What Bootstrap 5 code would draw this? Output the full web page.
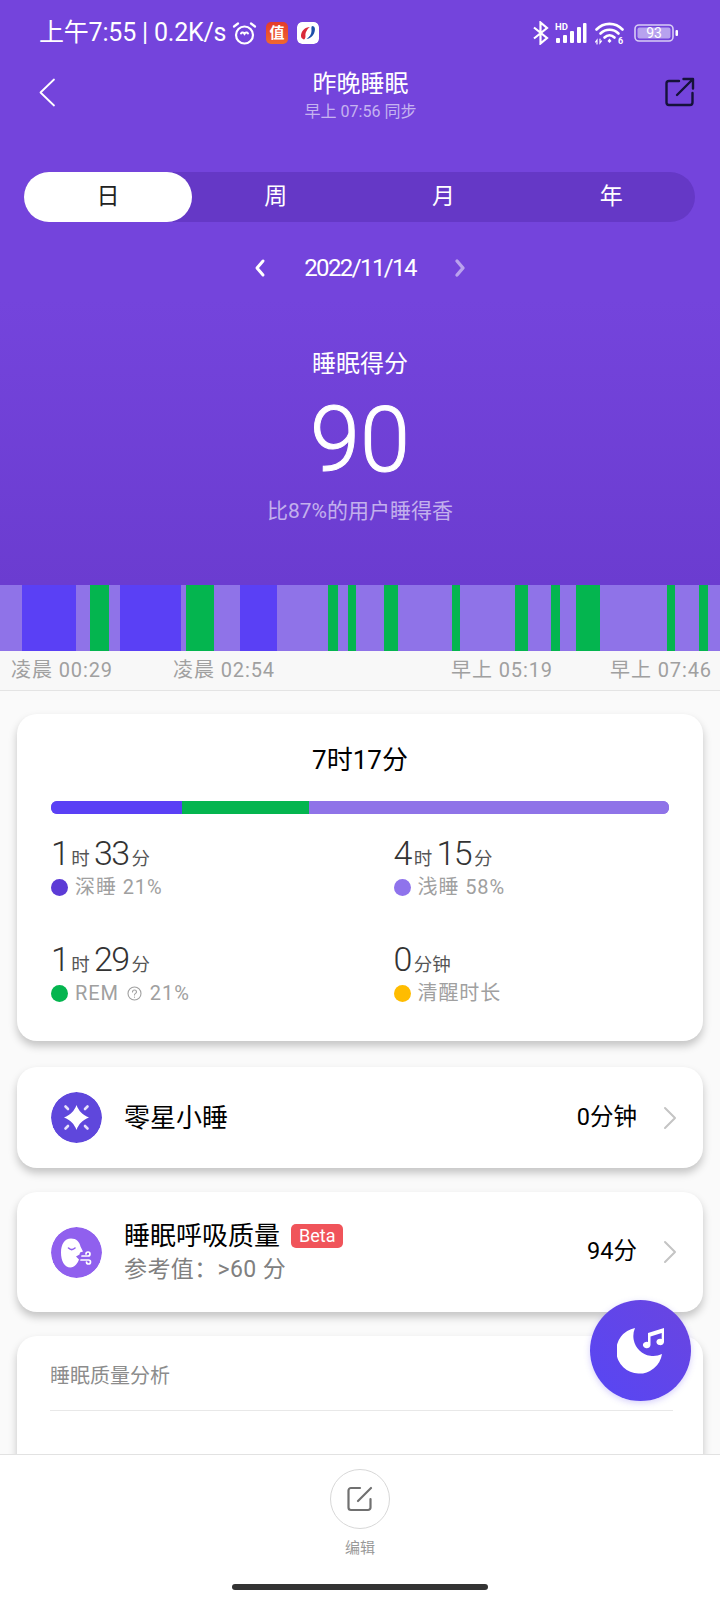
<!DOCTYPE html>
<html lang="zh-CN">

<head>
    <meta charset="UTF-8">
    <meta name="viewport" content="width=device-width, initial-scale=1.0">
    <title>昨晚睡眠</title>
    <link href="https://cdn.jsdelivr.net/npm/bootstrap@5.3.0/dist/css/bootstrap.min.css" rel="stylesheet">
    <script src="https://cdn.jsdelivr.net/npm/bootstrap@5.3.0/dist/js/bootstrap.bundle.min.js"></script>
    <style>
        html, body { width: 720px; height: 1600px; overflow: hidden; }
        body { font-family: Roboto, "Noto Sans CJK SC", sans-serif; background: #fafafa; color: #000; }
        .page { width: 720px; height: 1600px; position: relative; }
        .hero { height: 585px; background: linear-gradient(#7444dc 0, #7444dc 300px, #6b3cd0 585px); color: #fff; }
        .status-bar { height: 66px; padding: 0 41px 0 39px; font-size: 25px; line-height: 28px; }
        .status-text { width: 189px; white-space: nowrap; letter-spacing: -.2px; }
        .app-icon { width: 22px; height: 22px; border-radius: 5px; margin-left: 9px; }
        .sig-icon { margin-left: 6px; }
        .bat-icon { margin-left: 10px; }
        .nav-row { height: 60px; margin-top: -1px; padding: 0 25px 0 39px; }
        .nav-title { font-size: 24px; line-height: 32px; }
        .nav-sub { font-size: 16px; line-height: 20px; color: rgba(255, 255, 255, .6); margin-top: 2px; }
        .nav-back { margin-bottom: 5px; }
        .nav-share { margin-bottom: 6px; }
        .tab-track { margin: 47px 25px 0 24px; height: 50px; background: #6538c6; border-radius: 25px; }
        .tab-item { width: 168px; height: 50px; line-height: 50px; text-align: center; font-size: 23px; border-radius: 25px; }
        .tab-on { background: #fff; color: #222; }
        .date-row { height: 32px; margin-top: 30px; font-size: 24px; line-height: 32px; }
        .date-text { width: 112px; margin: 0 38px; text-align: center; white-space: nowrap; letter-spacing: -1.6px; }
        .score-label { margin-top: 64px; font-size: 24px; line-height: 32px; }
        .score-num { font-size: 90px; line-height: 92px; font-weight: 300; -webkit-text-stroke: 1px #fff; margin-top: 15px; }
        .score-sub { font-size: 21px; line-height: 28px; margin-top: 10px; color: rgba(255, 255, 255, .6); }
        .sleep-chart { height: 66px; background: #8f73e8; }
        .sleep-chart span { display: block; height: 66px; }
        .seg-l { background: #8f73e8; }
        .seg-d { background: #5a40f5; }
        .seg-g { background: #04b54f; }
        .time-band { height: 40px; padding: 0 0 0 11px; background: #f8f8f8; border-bottom: 1px solid #e4e4e4; font-size: 20px; line-height: 39px; color: #a0a0a0; letter-spacing: .9px; }
        .time-band span { white-space: nowrap; flex-shrink: 0; }
        .info-card { margin: 0 17px; border: 0; border-radius: 20px; background: #fff; box-shadow: 0 5px 9px rgba(0, 0, 0, .22); }
        .total-card { height: 327px; margin-top: 23px; padding: 28px 34px 0; }
        .total-time { font-size: 26px; line-height: 36px; text-align: center; }
        .total-bar { height: 13px; margin-top: 23px; border-radius: 6px; background: #8f73e8; }
        .stat-grid { display: grid; grid-template-columns: 342.5px 1fr; row-gap: 40px; margin-top: 21px; }
        .stat-val { height: 36px; font-size: 34px; line-height: 36px; font-weight: 300; color: #333; white-space: nowrap; letter-spacing: -1.5px; }
        .stat-val small { font-size: 18.5px; font-weight: 400; color: #555; letter-spacing: 0; margin: 0 4px 0 3px; }
        .stat-label { font-size: 20px; line-height: 28px; color: #a0a0a0; margin-top: 2px; white-space: nowrap; letter-spacing: .9px; }
        .stat-dot { width: 17px; height: 17px; border-radius: 50%; margin-right: 7px; }
        .row-card { padding: 0 26px 0 34px; }
        .nap-card { height: 101px; margin-top: 26px; }
        .breath-card { height: 120px; margin-top: 24px; }
        .row-icon { width: 51px; height: 51px; border-radius: 50%; margin-right: 22px; }
        .row-title { font-size: 26px; line-height: 36px; white-space: nowrap; }
        .row-sub { font-size: 23px; line-height: 32px; color: #808080; white-space: nowrap; letter-spacing: .4px; }
        .beta-tag { background: #f0545a; color: #fff; font-size: 18px; line-height: 24px; padding: 0 8px; border-radius: 5px; margin-left: 11px; }
        .row-value { font-size: 23.5px; margin-right: 26px; white-space: nowrap; }
        .analysis-card { height: 200px; margin-top: 24px; padding: 22px 30px 0 33px; border-radius: 20px 20px 0 0; }
        .analysis-title { font-size: 20px; line-height: 36px; color: #8c8c8c; padding-bottom: 16px; border-bottom: 1px solid #e8e8e8; }
        .fab { position: absolute; left: 590px; top: 1300px; width: 101px; height: 101px; border-radius: 50%; background: linear-gradient(45deg, #5746f4, #6a45e0); box-shadow: 0 2px 6px rgba(91, 69, 238, .25); }
        .bottom-bar { position: absolute; left: 0; top: 1454px; width: 720px; height: 146px; background: #fff; border-top: 1px solid #e2e2e2; }
        .edit-btn { width: 60px; height: 60px; margin-top: 14px; border: 1px solid #d8d8d8; border-radius: 50%; }
        .edit-label { font-size: 15px; line-height: 20px; color: #999; margin-top: 9px; }
        .home-bar { position: absolute; left: 232px; top: 129px; width: 256px; height: 6px; border-radius: 3px; background: #333; }
    </style>
</head>

<body>
    <div class="page overflow-hidden">
        <div class="hero">
            <!-- status bar -->
            <div class="status-bar d-flex align-items-center">
                <span class="status-text">上午7:55 | 0.2K/s</span>
                <svg class="ms-1" width="25" height="25" viewBox="0 0 25 25" fill="none" stroke="#fff" stroke-width="2.200" stroke-linecap="round">
                    <circle cx="12.500" cy="14" r="8.500" />
                    <path d="M2 5.500 6 2.500M23 5.500 19 2.500" />
                    <path d="M9 12.500c1-1.600 2.600-1 3.500.4.9-1.400 2.500-2 3.500-.4" stroke-width="2" />
                </svg>
                <span class="app-icon d-flex align-items-center justify-content-center text-white fw-bold" style="background:linear-gradient(#e33a2c,#f0682f);font-size:15px;line-height:1">值</span>
                <svg class="app-icon" viewBox="0 0 22 22">
                    <rect width="22" height="22" rx="5" fill="#fff" />
                    <path d="M4 14c0-5 4-9 9-9-3 2-5 6-4.500 9 0 3-1.500 4-2.500 3-1-.5-2-1.500-2-3z" fill="#d92b3a" />
                    <path d="M15 4c3 0 3.500 3 2.500 6-1 4-5 7-8 7 3-2 5-5 5-8 0-2-.5-4 .5-5z" fill="#1d4fa8" />
                </svg>
                <svg class="ms-auto" width="17" height="24" viewBox="0 0 17 24" fill="none" stroke="#fff" stroke-width="2.200">
                    <path d="M2 6.500 15 17 8.500 22.500V1.500L15 7 2 17.500" />
                </svg>
                <svg class="sig-icon" width="32" height="22" viewBox="0 0 32 22" fill="#fff">
                    <text x="0" y="8" font-family="Roboto" font-size="9.500" font-weight="700">HD</text>
                    <rect x="1" y="16" width="4" height="5" rx="1" />
                    <rect x="8" y="13" width="4" height="8" rx="1" />
                    <rect x="15" y="9" width="4" height="12" rx="1" />
                    <rect x="22" y="5" width="4" height="16" rx="1" />
                    <rect x="28" y="1" width="3.500" height="20" rx="1" />
                </svg>
                <svg class="ms-2" width="29" height="24" viewBox="0 0 29 24" fill="none" stroke="#fff" stroke-width="2.600" stroke-linecap="round">
                    <path d="M1.500 8.500C8.500 1 20.500 1 27.500 8.500" />
                    <path d="M5.500 12.500C10.500 7.500 18.500 7.500 23.500 12.500" />
                    <path d="M9.500 16.500C12.500 13.500 16.500 13.500 19.500 16.500" />
                    <path d="M14.500 17.500 12.500 20 14.500 22 16.500 20z" fill="#fff" stroke="none" />
                    <path d="M2 23v-4l-1.500 2M5 18v4l1.500-2" stroke-width="1.200" />
                    <text x="23" y="23" font-family="Roboto" font-size="9" font-weight="700" fill="#fff" stroke="none">6</text>
                </svg>
                <svg class="bat-icon" width="45" height="22" viewBox="0 0 45 22">
                    <rect x="1" y="3" width="38" height="16" rx="4" fill="none" stroke="#d8cdf5" stroke-width="1.600" />
                    <rect x="3.500" y="5.500" width="33" height="11" rx="2" fill="#b7a2ee" />
                    <rect x="41.500" y="8" width="2.500" height="6" rx="1" fill="#fff" />
                    <text x="20" y="16" text-anchor="middle" font-family="Roboto" font-size="14" fill="#fff">93</text>
                </svg>
            </div>

            <!-- nav -->
            <div class="nav-row d-flex align-items-center justify-content-between">
                <svg class="nav-back" width="17" height="29" viewBox="0 0 17 29" fill="none" stroke="#fff" stroke-width="1.800" stroke-linecap="round" stroke-linejoin="round">
                    <path d="M15 1.500 1.500 14.500 15 27.500" />
                </svg>
                <div class="text-center">
                    <div class="nav-title">昨晚睡眠</div>
                    <div class="nav-sub">早上 07:56 同步</div>
                </div>
                <svg class="nav-share" width="30" height="30" viewBox="0 0 30 30" fill="none" stroke="#15123a" stroke-width="2.400" stroke-linecap="round" stroke-linejoin="round">
                    <path d="M14 4H4a2.500 2.500 0 0 0-2.500 2.500v19A2.500 2.500 0 0 0 4 28h21a2.500 2.500 0 0 0 2.500-2.500V16" />
                    <path d="M12 18 27.500 2.500M18.500 2H28v9.500" />
                </svg>
            </div>

            <!-- day / week / month / year -->
            <div class="tab-track d-flex">
                <div class="tab-item tab-on">日</div>
                <div class="tab-item">周</div>
                <div class="tab-item">月</div>
                <div class="tab-item">年</div>
            </div>

            <div class="date-row d-flex align-items-center justify-content-center">
                <svg width="12" height="20" viewBox="0 0 12 20" fill="none" stroke="#fff" stroke-width="3" stroke-linecap="round" stroke-linejoin="round">
                    <path d="M9 3 3 10l6 7" />
                </svg>
                <span class="date-text">2022/11/14</span>
                <svg width="12" height="20" viewBox="0 0 12 20" fill="none" stroke="#fff" stroke-opacity=".5" stroke-width="3.400" stroke-linecap="round" stroke-linejoin="round">
                    <path d="M3 3l6 7-6 7" />
                </svg>
            </div>

            <div class="text-center">
                <div class="score-label">睡眠得分</div>
                <div class="score-num">90</div>
                <div class="score-sub">比87%的用户睡得香</div>
            </div>
        </div>

        <!-- sleep stages -->
        <div class="sleep-chart d-flex">
            <span class="seg-l" style="width:22px"></span>
            <span class="seg-d" style="width:54px"></span>
            <span class="seg-l" style="width:14px"></span>
            <span class="seg-g" style="width:19px"></span>
            <span class="seg-l" style="width:11px"></span>
            <span class="seg-d" style="width:61px"></span>
            <span class="seg-l" style="width:5px"></span>
            <span class="seg-g" style="width:28px"></span>
            <span class="seg-l" style="width:26px"></span>
            <span class="seg-d" style="width:37px"></span>
            <span class="seg-l" style="width:51px"></span>
            <span class="seg-g" style="width:10px"></span>
            <span class="seg-l" style="width:10px"></span>
            <span class="seg-g" style="width:8px"></span>
            <span class="seg-l" style="width:28px"></span>
            <span class="seg-g" style="width:14px"></span>
            <span class="seg-l" style="width:54px"></span>
            <span class="seg-g" style="width:8px"></span>
            <span class="seg-l" style="width:55px"></span>
            <span class="seg-g" style="width:13px"></span>
            <span class="seg-l" style="width:23px"></span>
            <span class="seg-g" style="width:9px"></span>
            <span class="seg-l" style="width:16px"></span>
            <span class="seg-g" style="width:24px"></span>
            <span class="seg-l" style="width:67px"></span>
            <span class="seg-g" style="width:8px"></span>
            <span class="seg-l" style="width:24px"></span>
            <span class="seg-g" style="width:9px"></span>
        </div>
        <div class="time-band d-flex">
            <span style="width:162px">凌晨 00:29</span>
            <span style="width:278px">凌晨 02:54</span>
            <span style="width:159px">早上 05:19</span>
            <span>早上 07:46</span>
        </div>

        <!-- total -->
        <div class="card info-card total-card">
            <div class="total-time">7时17分</div>
            <div class="progress total-bar">
                <div class="progress-bar seg-d" style="width:21.2%"></div>
                <div class="progress-bar seg-g" style="width:20.5%"></div>
                <div class="progress-bar seg-l" style="width:58.3%"></div>
            </div>
            <div class="stat-grid">
                <div>
                    <div class="stat-val">1<small>时</small>33<small>分</small></div>
                    <div class="stat-label d-flex align-items-center"><span class="stat-dot" style="background:#5c3bd6"></span>深睡 21%</div>
                </div>
                <div>
                    <div class="stat-val">4<small>时</small>15<small>分</small></div>
                    <div class="stat-label d-flex align-items-center"><span class="stat-dot" style="background:#8f73ec"></span>浅睡 58%</div>
                </div>
                <div>
                    <div class="stat-val">1<small>时</small>29<small>分</small></div>
                    <div class="stat-label d-flex align-items-center">
                        <span class="stat-dot" style="background:#04b54f"></span>REM
                        <svg class="mx-2" width="15" height="15" viewBox="0 0 15 15" fill="none" stroke="#a0a0a0" stroke-width="1.100" stroke-linecap="round">
                            <circle cx="7.500" cy="7.500" r="6.500" />
                            <path d="M5.500 6c0-2.600 4-2.600 4 0 0 1.400-2 1.400-2 3M7.500 11v.3" />
                        </svg>21%
                    </div>
                </div>
                <div>
                    <div class="stat-val">0<small>分钟</small></div>
                    <div class="stat-label d-flex align-items-center"><span class="stat-dot" style="background:#ffbc00"></span>清醒时长</div>
                </div>
            </div>
        </div>

        <!-- nap -->
        <div class="card info-card row-card nap-card flex-row align-items-center">
            <svg class="row-icon" viewBox="0 0 51 51">
                <circle cx="25.500" cy="25.500" r="25.500" fill="#5f47dc" />
                <path d="M25.500 13c2.200 6 6 9.800 12.500 12.500-6.500 2.700-10.300 6.500-12.500 12.500-2.200-6-6-9.800-12.500-12.500 6.500-2.700 10.300-6.500 12.500-12.500z" fill="#fff" />
                <path d="M14.500 14.500l2.500 2.500M36.500 14.500l-2.500 2.500M14.500 36.500l2.500-2.500M36.500 36.500l-2.500-2.500" stroke="#e6e0fa" stroke-width="2.600" stroke-linecap="round" />
            </svg>
            <span class="row-title">零星小睡</span>
            <span class="row-value ms-auto">0分钟</span>
            <svg width="14" height="24" viewBox="0 0 14 24" fill="none" stroke="#c4c4c4" stroke-width="2" stroke-linecap="round" stroke-linejoin="round">
                <path d="M2 2l10 10L2 22" />
            </svg>
        </div>

        <!-- breathing -->
        <div class="card info-card row-card breath-card flex-row align-items-center">
            <svg class="row-icon" viewBox="0 0 51 51">
                <circle cx="25.500" cy="25.500" r="25.500" fill="#9060ee" />
                <path d="M20 11.500c5.500 0 8.500 3.500 9.500 8l2.500 5-3 1-.5 2-3.500 2 3 3c-1.500 4-4.500 8-8.500 8-6.500 0-9.500-7-9.500-15S13.500 11.500 20 11.500z" fill="#fff" />
                <path d="M17.500 21c1.800 1.800 4.500 1.800 6.500 0" fill="none" stroke="#9060ee" stroke-width="1.600" stroke-linecap="round" />
                <path d="M31 29h6a2 2 0 1 0-2-2M30 33h7.500a2 2 0 1 1-2 2" fill="none" stroke="#fff" stroke-width="1.700" stroke-linecap="round" />
            </svg>
            <div>
                <div class="row-title d-flex align-items-center">睡眠呼吸质量<span class="beta-tag">Beta</span></div>
                <div class="row-sub">参考值：&gt;60 分</div>
            </div>
            <span class="row-value ms-auto">94分</span>
            <svg width="14" height="24" viewBox="0 0 14 24" fill="none" stroke="#c4c4c4" stroke-width="2" stroke-linecap="round" stroke-linejoin="round">
                <path d="M2 2l10 10L2 22" />
            </svg>
        </div>

        <!-- analysis -->
        <div class="card info-card analysis-card">
            <div class="analysis-title">睡眠质量分析</div>
        </div>

        <div class="fab d-flex align-items-center justify-content-center">
            <svg width="48" height="46" viewBox="0 0 48 46" fill="#fff">
                <path d="M18 0A23 23 0 1 0 45 26 20 20 0 0 1 18 0z" />
                <path d="M31 5 47 0v14a3.800 3.200 0 1 1-2.300-3V5l-11.200 3.500V17a3.800 3.200 0 1 1-2.500-3z" />
            </svg>
        </div>

        <!-- bottom bar -->
        <div class="bottom-bar d-flex flex-column align-items-center">
            <div class="edit-btn d-flex align-items-center justify-content-center">
                <svg width="26" height="26" viewBox="0 0 26 26" fill="none" stroke="#707070" stroke-width="2.200" stroke-linecap="round" stroke-linejoin="round">
                    <path d="M13 2H4a2.500 2.500 0 0 0-2.500 2.500v17A2.500 2.500 0 0 0 4 24h17a2.500 2.500 0 0 0 2.500-2.500V13" />
                    <path d="M11 15 24 2" />
                </svg>
            </div>
            <div class="edit-label">编辑</div>
            <div class="home-bar"></div>
        </div>
    </div>
</body>

</html>
